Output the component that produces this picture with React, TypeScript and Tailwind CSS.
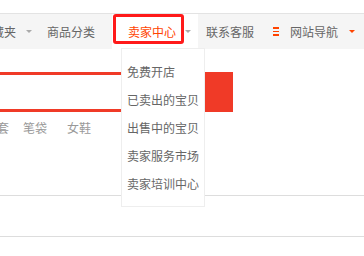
import React from 'react';

const FONT = { fontFamily: '"Noto Sans CJK SC", "Noto Sans", sans-serif' };

const Caret = ({ color }: { color: string }) => (
  <span
    className="inline-block w-0 h-0 border-l-[3px] border-r-[3px] border-t-[3px] border-l-transparent border-r-transparent"
    style={{ borderTopColor: color }}
  />
);

const SELLER_LINKS = ['免费开店', '已卖出的宝贝', '出售中的宝贝', '卖家服务市场', '卖家培训中心'];

export default function App() {
  return (
    <div className="relative w-[364px] h-[256px] overflow-hidden bg-white text-[12px]" style={FONT}>
      <div className="h-[13px]" />

      {/* site nav bar */}
      <div className="h-[36px] border-t border-[#e3e3e3] bg-[#f5f5f5] flex items-stretch text-[#666] whitespace-nowrap">
        <div className="flex items-center ml-[-20px]">
          <span>收藏夹</span>
          <span className="ml-[10px] flex"><Caret color="#aaa" /></span>
        </div>
        <div className="flex items-center ml-[15px]">
          <span>商品分类</span>
        </div>
        <div className="flex items-center ml-[17px] pl-[16px] pr-[7px] bg-white">
          <span className="text-[#ff4400]">卖家中心</span>
          <span className="ml-[9px] flex"><Caret color="#aaa" /></span>
        </div>
        <div className="flex items-center ml-[8px]">
          <span>联系客服</span>
        </div>
        <div className="flex items-center ml-[19px]">
          <span className="flex flex-col gap-[2px] w-[6px]">
            <span className="h-[1.5px] bg-[#ff4400]" />
            <span className="h-[1.5px] bg-[#ff4400]" />
            <span className="h-[1.5px] bg-[#ff4400]" />
          </span>
          <span className="ml-[11px]">网站导航</span>
          <span className="ml-[11px] flex"><Caret color="#ff4400" /></span>
        </div>
      </div>

      {/* search */}
      <div className="mt-[23px] flex h-[40px]">
        <div className="w-[205px] border-y-[3px] border-[#f03a27] bg-white" />
        <div className="w-[28px] bg-[#f03a27]" />
      </div>

      <div className="mt-[6px] flex leading-[20px] text-[#999] whitespace-nowrap">
        <span className="ml-[-15px]">外套</span>
        <span className="ml-[14px]">笔袋</span>
        <span className="ml-[20px]">女鞋</span>
      </div>

      <div className="mt-[57px] h-[41px] border-t border-[#ddd]" />
      <div className="border-t border-[#ddd]" />

      {/* seller dropdown */}
      <div className="absolute left-[121px] top-[48px] w-[84px] h-[159px] border border-[#eee] bg-white pt-[9px] pl-[5px] text-[#666] whitespace-nowrap">
        {SELLER_LINKS.map((t) => (
          <div key={t} className="h-[28px] leading-[28px]">{t}</div>
        ))}
      </div>

      {/* highlight box */}
      <div className="absolute left-[113px] top-[14px] w-[71px] h-[30px] border-[3px] border-[#ff1a1a] rounded-[3px]" />
    </div>
  );
}
